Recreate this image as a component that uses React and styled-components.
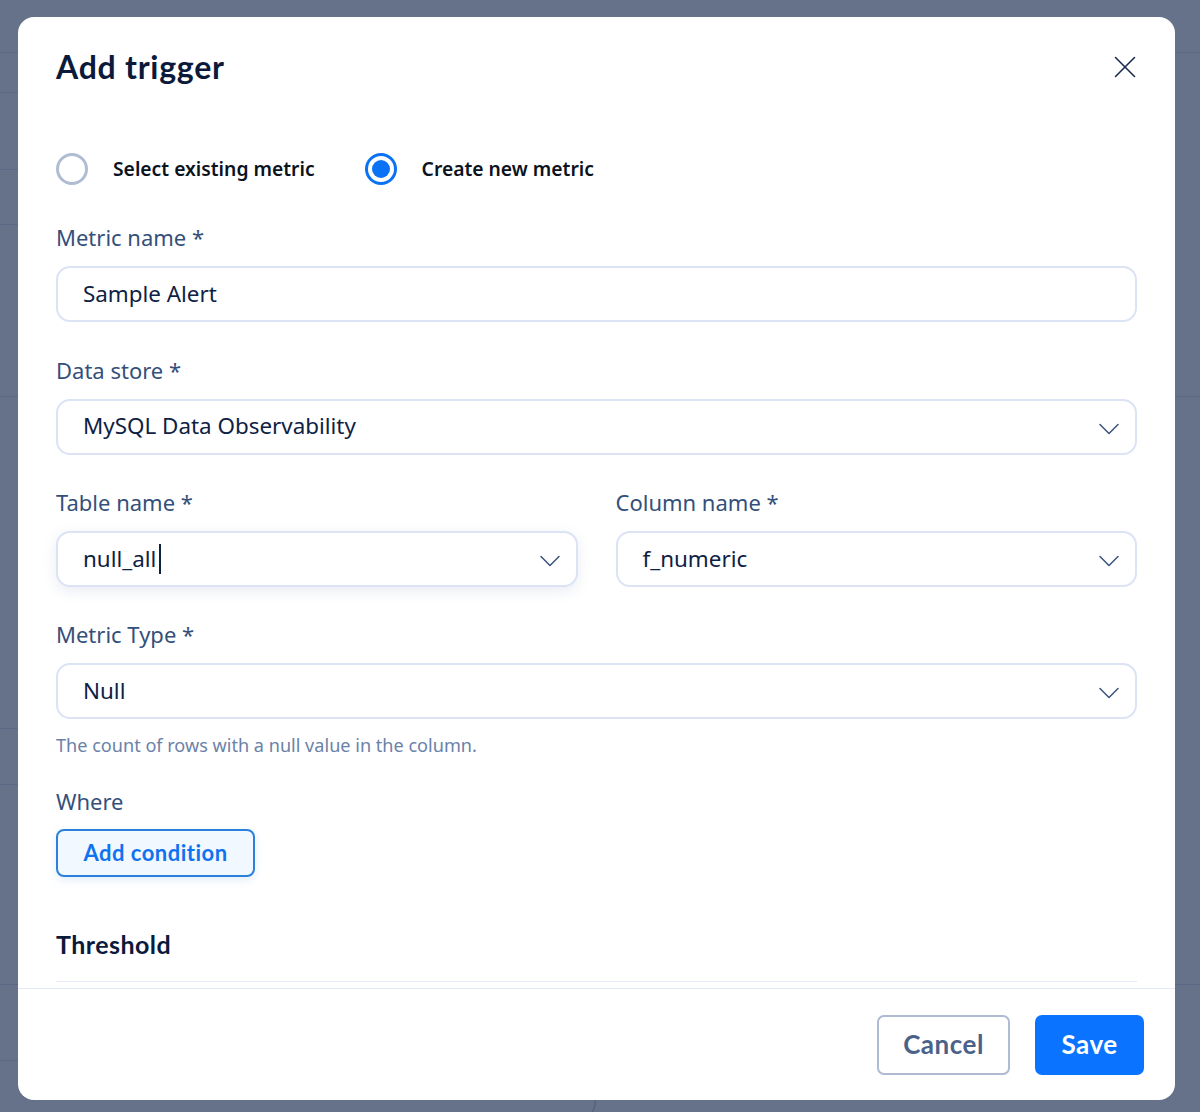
import styled, { createGlobalStyle } from 'styled-components';
import { X, ChevronDown } from 'lucide-react';

const GlobalStyle = createGlobalStyle`
    html, body {
        margin: 0;
        padding: 0;
    }
    body {
        width: 1200px;
        height: 1112px;
        overflow: hidden;
        background: #647089;
    }
`;

const Page = styled.div`
    position: relative;
    width: 1200px;
    height: 1112px;
    overflow: hidden;
    background: #667289;
`;

const Backdrop = styled.div`
    display: flex;
    flex-direction: column;
    height: 100%;
`;

const BackRow = styled.div`
    height: ${({ $height }) => $height}px;
    flex-shrink: 0;
    box-sizing: border-box;
    width: ${({ $short }) => ($short ? '18px' : '100%')};
    border-bottom: 1px solid #5c6885;
`;

const BackFoot = styled.div`
    flex: 1;
    display: flex;
    align-items: flex-end;
    padding-left: 590px;
    color: #56617f;
`;

const Modal = styled.div`
    position: absolute;
    top: 17px;
    left: 18px;
    width: 1157px;
    height: 1083px;
    display: flex;
    flex-direction: column;
    background: #fff;
    border-radius: 16px;
    overflow: hidden;
`;

const Body = styled.div`
    flex: 1;
    min-height: 0;
    padding: 0 38px;
    display: flex;
    flex-direction: column;
`;

const Header = styled.div`
    height: 100px;
    display: flex;
    align-items: flex-start;
    justify-content: space-between;
    padding-top: 29px;
    box-sizing: border-box;
`;

const Title = styled.h2`
    margin: 0;
    font-family: Lato, 'Open Sans', sans-serif;
    font-size: 32px;
    line-height: 42px;
    font-weight: 700;
    letter-spacing: 0.75px;
    color: #0b1a3b;
`;

const CloseIcon = styled(X)`
    width: 38px;
    height: 38px;
    margin: 2px -7px 0 0;
    stroke-width: 1;
    color: #1a2a4c;
`;

const RadioRow = styled.div`
    display: flex;
    align-items: center;
    height: 32px;
    margin-top: 36px;
    gap: 50px;
`;

const RadioOption = styled.div`
    display: flex;
    align-items: center;
    gap: 25px;
    font-family: 'Noto Sans', sans-serif;
    font-size: 19.3px;
    font-weight: 600;
    color: #0b1220;
`;

const RadioText = styled.span`
    margin-top: -2px;
`;

const RadioMark = styled.span`
    width: 32px;
    height: 32px;
    box-sizing: border-box;
    border-radius: 50%;
    border: 3px solid ${({ $checked }) => ($checked ? '#0a73f5' : '#afbcd2')};
    display: flex;
    align-items: center;
    justify-content: center;
    &::after {
        content: '';
        display: ${({ $checked }) => ($checked ? 'block' : 'none')};
        width: 18px;
        height: 18px;
        border-radius: 50%;
        background: #0a73f5;
    }
`;

const Field = styled.div`
    display: flex;
    flex-direction: column;
    flex: 1;
    min-width: 0;
`;

const Label = styled.label`
    font-family: 'Noto Sans', sans-serif;
    font-size: 22px;
    line-height: 30px;
    color: #34507a;
    margin-bottom: 14px;
`;

const WhereLabel = styled(Label)`
    line-height: 32px;
    margin-bottom: 12px;
`;

const InputBox = styled.div`
    height: 56px;
    box-sizing: border-box;
    display: flex;
    align-items: center;
    justify-content: space-between;
    padding: 0 8px 2px 25px;
    border: 2px solid #dbe3f4;
    border-radius: 14px;
    background: #fff;
    font-family: 'Noto Sans', sans-serif;
    font-size: 22.4px;
    color: #0e2143;
    box-shadow: ${({ $focused }) => ($focused ? '0 4px 14px rgba(100, 120, 170, 0.14)' : 'none')};
`;

const Chevron = styled(ChevronDown)`
    width: 36px;
    height: 36px;
    margin-top: 6px;
    stroke-width: 1;
    color: #3a5378;
    flex-shrink: 0;
`;

const Caret = styled.span`
    display: inline-block;
    width: 2px;
    height: 30px;
    margin-left: 3px;
    background: #0e2143;
    vertical-align: -7px;
`;

const Stack = styled.div`
    display: flex;
    flex-direction: column;
    margin-top: ${({ $top }) => $top}px;
`;

const TwoCols = styled.div`
    display: flex;
    gap: 38px;
    margin-top: ${({ $top }) => $top}px;
`;

const Hint = styled.div`
    font-family: 'Noto Sans', sans-serif;
    font-size: 18.1px;
    line-height: 28px;
    margin-top: 12px;
    color: #6b82a8;
`;

const AddButton = styled.button`
    width: 199px;
    height: 48px;
    box-sizing: border-box;
    padding: 0 0 2px;
    border: 2px solid #2b80dc;
    border-radius: 8px;
    background: #f2f8ff;
    color: #0f72ee;
    font-family: Lato, sans-serif;
    font-size: 22px;
    font-weight: 700;
    letter-spacing: 0.5px;
    box-shadow: 0 3px 8px rgba(60, 130, 220, 0.14);
`;

const SectionTitle = styled.h3`
    margin: 51px 0 0;
    font-family: Lato, sans-serif;
    font-size: 25px;
    line-height: 32px;
    font-weight: 700;
    letter-spacing: 0.45px;
    color: #0b1a3b;
`;

const Rule = styled.div`
    height: 1px;
    margin-top: 21px;
    background: #e3e9f7;
`;

const Footer = styled.div`
    height: 112px;
    flex-shrink: 0;
    box-sizing: border-box;
    border-top: 1px solid #e3e9f7;
    display: flex;
    justify-content: flex-end;
    align-items: flex-start;
    gap: 25px;
    padding: 26px 31px 0 0;
`;

const FooterButton = styled.button`
    height: 60px;
    width: ${({ $width }) => $width}px;
    box-sizing: border-box;
    padding: 0 0 2px;
    border-radius: 7px;
    font-family: Lato, sans-serif;
    font-size: 26px;
    font-weight: 700;
    letter-spacing: 0.5px;
    border: ${({ $primary }) => ($primary ? 'none' : '2px solid #aebbd3')};
    background: ${({ $primary }) => ($primary ? '#0a73ff' : '#fff')};
    color: ${({ $primary }) => ($primary ? '#fff' : '#4a628a')};
`;

const backRows = [
    { height: 53 },
    { height: 40, short: true },
    { height: 77, short: true },
    { height: 55, short: true },
    { height: 172 },
    { height: 332, short: true },
    { height: 56, short: true },
    { height: 200 },
    { height: 76, short: true },
];

const App = () => {
    return (
        <>
            <GlobalStyle />
            <Page>
                <Backdrop>
                    {backRows.map((row, i) => (
                        <BackRow key={i} $height={row.height} $short={row.short} />
                    ))}
                    <BackFoot>
                        <svg width="8" height="12" viewBox="0 0 8 12" fill="none" stroke="currentColor" strokeWidth="1.5">
                            <path d="M5 0c.6 4-.4 8-2.5 12" />
                        </svg>
                    </BackFoot>
                </Backdrop>
                <Modal>
                    <Body>
                        <Header>
                            <Title>Add trigger</Title>
                            <CloseIcon />
                        </Header>
                        <RadioRow>
                            <RadioOption><RadioMark /><RadioText>Select existing metric</RadioText></RadioOption>
                            <RadioOption><RadioMark $checked /><RadioText>Create new metric</RadioText></RadioOption>
                        </RadioRow>
                        <Stack $top={37}>
                            <Field>
                                <Label>Metric name *</Label>
                                <InputBox>Sample Alert</InputBox>
                            </Field>
                        </Stack>
                        <Stack $top={32.5}>
                            <Field>
                                <Label>Data store *</Label>
                                <InputBox>MySQL Data Observability<Chevron /></InputBox>
                            </Field>
                        </Stack>
                        <TwoCols $top={32.5}>
                            <Field>
                                <Label>Table name *</Label>
                                <InputBox $focused><span>null_all<Caret /></span><Chevron /></InputBox>
                            </Field>
                            <Field>
                                <Label>Column name *</Label>
                                <InputBox>f_numeric<Chevron /></InputBox>
                            </Field>
                        </TwoCols>
                        <Stack $top={32}>
                            <Field>
                                <Label>Metric Type *</Label>
                                <InputBox>Null<Chevron /></InputBox>
                            </Field>
                        </Stack>
                        <Hint>The count of rows with a null value in the column.</Hint>
                        <Stack $top={26}>
                            <WhereLabel as="div">Where</WhereLabel>
                            <AddButton>Add condition</AddButton>
                        </Stack>
                        <SectionTitle>Threshold</SectionTitle>
                        <Rule />
                    </Body>
                    <Footer>
                        <FooterButton $width={133}>Cancel</FooterButton>
                        <FooterButton $width={109} $primary>Save</FooterButton>
                    </Footer>
                </Modal>
            </Page>
        </>
    );
};

export default App;
